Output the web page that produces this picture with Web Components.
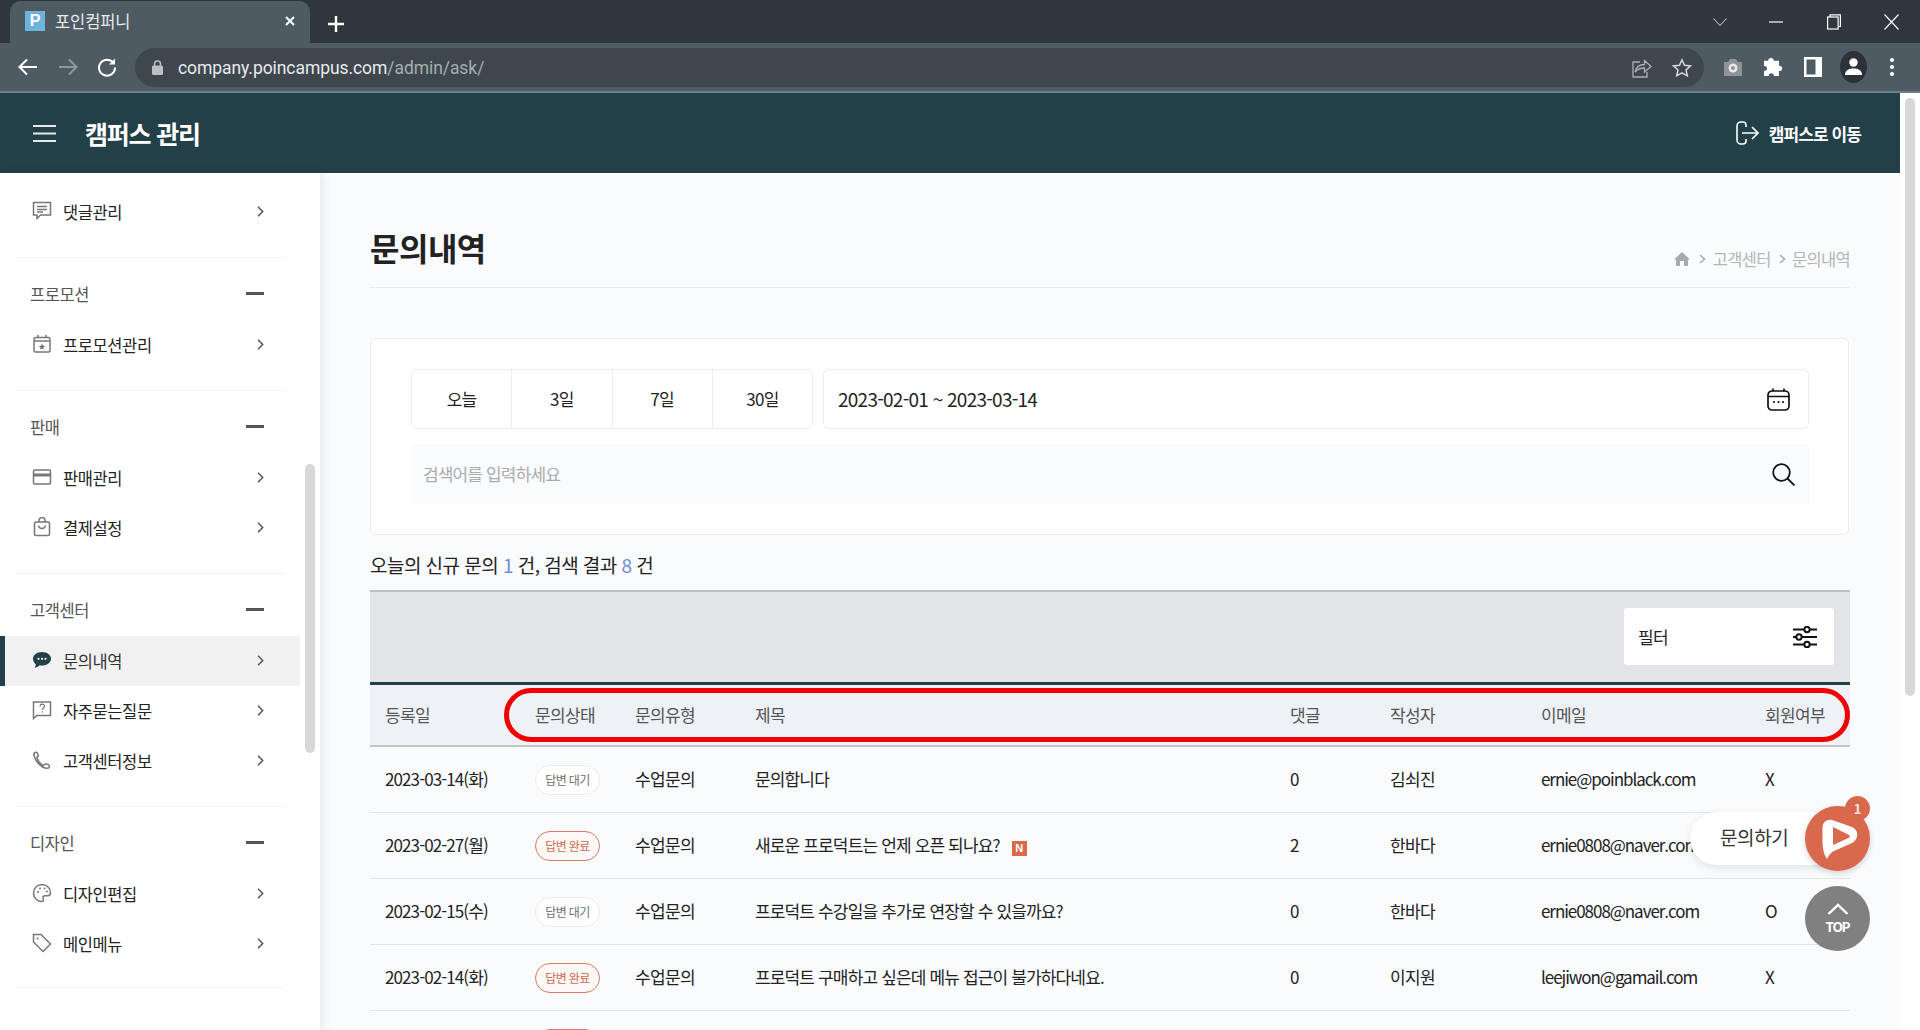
<!DOCTYPE html>
<html lang="ko">
<head>
<meta charset="utf-8">
<title>포인컴퍼니</title>
<style>
    html, body{
        margin: 0;
        padding: 0;
        height: 1030px;
        overflow: hidden;
        font-family: 'Noto Sans CJK KR', 'Noto Sans', sans-serif;
        color: #222;
        background: #fff;
    }
</style>
</head>
<body>
<browser-bar></browser-bar>
<page-frame>
    <admin-header></admin-header>
    <side-nav>
        <nav-item icon="comment">댓글관리</nav-item>
        <nav-sep></nav-sep>
        <nav-title>프로모션</nav-title>
        <nav-item icon="promo">프로모션관리</nav-item>
        <nav-sep></nav-sep>
        <nav-title>판매</nav-title>
        <nav-item icon="card">판매관리</nav-item>
        <nav-item icon="bag">결제설정</nav-item>
        <nav-sep></nav-sep>
        <nav-title>고객센터</nav-title>
        <nav-item icon="chat" active>문의내역</nav-item>
        <nav-item icon="faq">자주묻는질문</nav-item>
        <nav-item icon="phone">고객센터정보</nav-item>
        <nav-sep></nav-sep>
        <nav-title>디자인</nav-title>
        <nav-item icon="palette">디자인편집</nav-item>
        <nav-item icon="tag">메인메뉴</nav-item>
        <nav-sep style="margin-top:-2px"></nav-sep>
    </side-nav>
    <ask-page>
        <page-title>문의내역</page-title>
        <search-card></search-card>
        <ask-summary></ask-summary>
        <ask-toolbar></ask-toolbar>
        <ask-head></ask-head>
        <ask-row date="2023-03-14(화)" status="wait" kind="수업문의" comments="0" author="김쇠진" email="ernie@poinblack.com" member="X">문의합니다</ask-row>
        <ask-row date="2023-02-27(월)" status="done" kind="수업문의" comments="2" author="한바다" email="ernie0808@naver.com" member="O" fresh>새로운 프로덕트는 언제 오픈 되나요?</ask-row>
        <ask-row date="2023-02-15(수)" status="wait" kind="수업문의" comments="0" author="한바다" email="ernie0808@naver.com" member="O">프로덕트 수강일을 추가로 연장할 수 있을까요?</ask-row>
        <ask-row date="2023-02-14(화)" status="done" kind="수업문의" comments="0" author="이지원" email="leejiwon@gamail.com" member="X">프로덕트 구매하고 싶은데 메뉴 접근이 불가하다네요.</ask-row>
        <ask-row status="done" blank></ask-row>
    </ask-page>
    <float-actions></float-actions>
</page-frame>

<script>
const icons = {
    comment: '<path d="M1.5 1.5h17v12.5H8.5l-3.5 3.5V14H1.5z"/><path d="M5 5.5h10M5 8.5h10M5 11h6"/>',
    promo: '<rect x="2" y="3.5" width="16" height="14.5" rx="1.5"/><path d="M2 7h16M6 1v3M14 1v3"/><path d="M10 9.5l1 2.2 2.3.2-1.8 1.5.6 2.2-2.1-1.2-2.1 1.2.6-2.2-1.8-1.5 2.3-.2z" fill="#777" stroke="none"/>',
    card: '<rect x="1.5" y="3" width="17" height="14" rx="1.5"/><path d="M1.5 8h17" stroke-width="3"/>',
    bag: '<rect x="2.5" y="5" width="15" height="13.5" rx="1.5"/><path d="M7 5V3.5a3 3 0 0 1 6 0V5M6.5 8.5c.5 4 6.5 4 7 0"/>',
    chat: '<path d="M10 2c5 0 9 2.900 9 6.800s-4 6.800-9 6.800c-.9 0-1.700-.1-2.500-.3-1.300 1.500-3 2.200-5 2.400.8-1 1.300-2 1.400-3.300C2.300 13.100 1 11.100 1 8.800 1 4.900 5 2 10 2z" fill="#233f48" stroke="none"/><circle cx="6.500" cy="8.800" r="1.100" fill="#fff" stroke="none"/><circle cx="10" cy="8.800" r="1.100" fill="#fff" stroke="none"/><circle cx="13.500" cy="8.800" r="1.100" fill="#fff" stroke="none"/>',
    faq: '<path d="M1.500 2h17v13.500H5l-3.500 3z"/><path d="M8 6.500c0-3 4.500-3 4.500-.3 0 1.800-2.200 1.800-2.200 3.500M10.300 11.200v1.200" stroke-width="1.200"/>',
    phone: '<path d="M2 3.500c.7-1 2-1.500 3-1l1.500 3.300-1.700 1.700c.8 3 3.500 6.500 6.500 8l2-1.500c1.500-.2 3.500.5 4 1.800.3 1-.3 2.200-1.500 2.500-7 .5-14-8.500-13.800-15.800z"/>',
    palette: '<path d="M10 1.500c-5 0-8.500 3.800-8.500 8.500s3.800 8.500 8 8.500c2 0 2.500-1.500 1.700-2.800-.8-1.500 0-3 1.800-3h3c1.800 0 2.500-1.400 2.500-3 0-4.500-3.700-8.200-8.500-8.200z"/><circle cx="6" cy="9" r="1" fill="#777" stroke="none"/><circle cx="8" cy="5.500" r="1" fill="#777" stroke="none"/><circle cx="12.500" cy="5.500" r="1" fill="#777" stroke="none"/><circle cx="15" cy="8.500" r="1" fill="#777" stroke="none"/>',
    tag: '<path d="M1.500 1.500h7.500l9.500 9.500-7.500 7.500L1.500 9z"/><circle cx="5.500" cy="5.500" r="1" fill="#777" stroke="none"/>'
};

const barTemplate = document.createElement('template');
barTemplate.innerHTML = `
    <style>
        :host{
            display: block;
            height: 93px;
            font-family: 'Roboto', 'Noto Sans CJK KR', sans-serif;
        }
        .strip{
            height: 43px;
            background: #2f363d;
            display: flex;
            align-items: flex-end;
            padding-left: 10px;
        }
        .tab{
            width: 300px;
            height: 42px;
            box-sizing: border-box;
            background: #4f5b62;
            border-radius: 10px 10px 0 0;
            display: flex;
            align-items: center;
            padding: 0 14px 2px 15px;
            color: #e8eaed;
            font: 400 16.5px 'Noto Sans CJK KR', sans-serif;
        }
        .fav{
            width: 20px;
            height: 20px;
            background: #6cb4dc;
            color: #fff;
            font: 700 16px/20px 'Liberation Sans', sans-serif;
            text-align: center;
            margin-right: 10px;
        }
        .tab span.name{ flex: 1; letter-spacing: -.1px; }
        .plus{ margin: 0 0 11px 18px; }
        .spacer{ flex: 1; }
        .win{
            display: flex;
            align-items: center;
            height: 43px;
            padding-right: 21px;
        }
        .win svg{ display: block; }
        .tools{
            height: 48px;
            background: #4f5b62;
            border-bottom: 2px solid #6f8088;
            display: flex;
            align-items: center;
            padding-left: 17px;
            box-sizing: content-box;
        }
        .nav{
            display: flex;
            align-items: center;
            gap: 18px;
            width: 118px;
        }
        .url{
            width: 1569px;
            height: 39px;
            margin-top: 1px;
            background: #3f474e;
            border-radius: 20px;
            display: flex;
            align-items: center;
            padding: 0 12px 0 17px;
            box-sizing: border-box;
            color: #e8eaed;
            font-size: 17.500px;
            letter-spacing: -.07px;
        }
        .url em{ font-style: normal; color: #a6adb3; }
        .url .addr{ flex: 1; margin-left: 15px; white-space: nowrap; }
        .ext{
            display: flex;
            align-items: center;
            margin-left: 19px;
        }
    </style>
    <div class="strip">
        <div class="tab">
            <div class="fav">P</div>
            <span class="name">포인컴퍼니</span>
            <svg width="12" height="12" viewBox="0 0 12 12" fill="none" stroke="#fff" stroke-width="2"><path d="M2 2l8 8M10 2l-8 8"/></svg>
        </div>
        <svg class="plus" width="16" height="16" viewBox="0 0 16 16" fill="none" stroke="#fff" stroke-width="2.4"><path d="M8 0v16M0 8h16"/></svg>
        <div class="spacer"></div>
        <div class="win">
            <svg width="14" height="8" viewBox="0 0 14 8" fill="none" stroke="#d5d8da" stroke-width="1"><path d="M.5.5L7 7.500 13.500.5"/></svg>
            <svg style="margin-left:42px" width="14" height="2" viewBox="0 0 14 2" fill="none" stroke="#fff" stroke-width="1.200"><path d="M0 1h14"/></svg>
            <svg style="margin-left:44px" width="14" height="16" viewBox="0 0 14 16" fill="none" stroke="#fff" stroke-width="1.200"><rect x=".6" y="3" width="10.500" height="12"/><path d="M3 3V.8h10.400v11.700h-2.300"/></svg>
            <svg style="margin-left:43px" width="15" height="16" viewBox="0 0 15 16" fill="none" stroke="#fff" stroke-width="1.100"><path d="M.5.5l14 15M14.500.5l-14 15"/></svg>
        </div>
    </div>
    <div class="tools">
        <div class="nav">
            <svg width="22" height="20" viewBox="0 0 22 20" fill="none" stroke="#fff" stroke-width="2"><path d="M20 10H3M10 2.500L2.500 10l7.500 7.500"/></svg>
            <svg width="22" height="20" viewBox="0 0 22 20" fill="none" stroke="#8f989d" stroke-width="2"><path d="M2 10h17M12 2.500l7.500 7.500-7.500 7.500"/></svg>
            <svg width="20" height="20" viewBox="0 0 20 20" fill="none" stroke="#fff" stroke-width="2"><path d="M16.500 6A8 8 0 1 0 18 10.500"/><path d="M18 1.500v6h-6" fill="#fff" stroke="none"/></svg>
        </div>
        <div class="url">
            <svg width="11" height="15" viewBox="0 0 11 15" fill="#bcc0c3"><rect y="5.500" width="11" height="9.500" rx="1.500"/><path d="M2.500 6V4a3 3 0 0 1 6 0v2" fill="none" stroke="#bcc0c3" stroke-width="1.500"/></svg>
            <span class="addr">company.poincampus.com<em>/admin/ask/</em></span>
            <svg width="20" height="20" viewBox="0 0 20 20" fill="none" stroke="#aab0b4" stroke-width="1.300" style="margin-right:20px"><path d="M8 4H1v15h14v-5"/><path d="M3 14c1-5 5-7.500 9.500-7.500V2.500l6.500 6-6.500 5.500V10C8.500 10 5.500 11 3 14z"/></svg>
            <svg width="20" height="20" viewBox="0 0 20 20" fill="none" stroke="#d7dadc" stroke-width="1.500"><path d="M10 1.800l2.500 5.500 6 .6-4.500 4 1.300 5.900L10 14.800l-5.300 3 1.300-5.900-4.500-4 6-.6z"/></svg>
        </div>
        <div class="ext">
            <svg width="20" height="20" viewBox="0 0 20 20"><path d="M1 5h4l2-3h6l2 3h4v14H1z" fill="#8f9395"/><circle cx="10" cy="11" r="4.500" fill="#e8e8e8"/><circle cx="10" cy="11" r="2" fill="#8f9395"/></svg>
            <svg style="margin-left:20px" width="20" height="20" viewBox="0 0 20 20" fill="#fff"><path d="M8 1c1.800 0 2.800 1.200 2.800 2.800H16v5.100c1.800-.3 3.200.8 3.200 2.600S17.800 14.400 16 14v5H10.800c.3-1.700-.9-2.800-2.500-2.800S5.500 17.300 5.800 19H1v-5.200c1.700.3 3-.7 3-2.400S2.700 8.600 1 9V3.800h4.200C5.200 2.200 6.200 1 8 1z"/></svg>
            <svg style="margin-left:21px" width="18" height="20" viewBox="0 0 18 20"><rect width="18" height="20" fill="#fff"/><rect x="2.500" y="2.500" width="9" height="15" fill="#4f5b62"/></svg>
            <svg style="margin-left:18px" width="27" height="32" viewBox="0 0 27 32"><ellipse cx="13.500" cy="16" rx="13.500" ry="16" fill="#2c3238"/><circle cx="13.500" cy="11.500" r="4.200" fill="#fff"/><path d="M5 24c0-5 4-6.500 8.500-6.500S22 19 22 24z" fill="#fff"/></svg>
            <svg style="margin-left:22px" width="6" height="20" viewBox="0 0 6 20" fill="#fff"><circle cx="3" cy="3" r="2"/><circle cx="3" cy="10" r="2"/><circle cx="3" cy="17" r="2"/></svg>
        </div>
    </div>
`;
class BrowserBar extends HTMLElement {
    constructor(){
        super();
        this.attachShadow({mode: 'open'});
        this.shadowRoot.appendChild(barTemplate.content.cloneNode(true));
    }
}
window.customElements.define('browser-bar', BrowserBar);

const frameTemplate = document.createElement('template');
frameTemplate.innerHTML = `
    <style>
        :host{
            display: grid;
            position: relative;
            height: 937px;
            grid-template-columns: 320px 1580px 20px;
            grid-template-rows: 80px 857px;
            overflow: hidden;
            background: #fff;
        }
        ::slotted(admin-header){ grid-column: 1 / 3; grid-row: 1; }
        ::slotted(side-nav){ grid-column: 1; grid-row: 2; }
        ::slotted(ask-page){ grid-column: 2; grid-row: 2; }
        .scroll{
            grid-column: 3;
            grid-row: 1 / 3;
            padding: 5px 5px 0;
        }
        .thumb{
            height: 598px;
            background: #d8d8d8;
            border-radius: 5px;
        }
    </style>
    <slot></slot>
    <div class="scroll"><div class="thumb"></div></div>
`;
class PageFrame extends HTMLElement {
    constructor(){
        super();
        this.attachShadow({mode: 'open'});
        this.shadowRoot.appendChild(frameTemplate.content.cloneNode(true));
    }
}
window.customElements.define('page-frame', PageFrame);

const headerTemplate = document.createElement('template');
headerTemplate.innerHTML = `
    <style>
        :host{
            display: flex;
            align-items: center;
            background: #233f48;
            color: #fff;
            padding: 0 39px 0 33px;
        }
        h1{
            font-size: 25px;
            font-weight: 700;
            letter-spacing: -1.200px;
            margin: 0 0 0 29px;
            flex: 1;
        }
        a{
            display: flex;
            align-items: center;
            font-size: 17px;
            font-weight: 700;
            letter-spacing: -.9px;
        }
        a svg{ margin-right: 10px; margin-left: -1px; }
    </style>
    <svg width="23" height="17" viewBox="0 0 23 17" fill="none" stroke="#e6e9ea" stroke-width="2"><path d="M0 1h23M0 8.500h23M0 16h23"/></svg>
    <h1>캠퍼스 관리</h1>
    <a>
        <svg width="23" height="24" viewBox="0 0 23 24" fill="none" stroke="#fff" stroke-width="1.600"><path d="M10 6V4a3 3 0 0 0-3-3H5a4 4 0 0 0-4 4v14a4 4 0 0 0 4 4h2a3 3 0 0 0 3-3v-2"/><path d="M6 12h16M16 6l6 6-6 6"/></svg>
        캠퍼스로 이동
    </a>
`;
class AdminHeader extends HTMLElement {
    constructor(){
        super();
        this.attachShadow({mode: 'open'});
        this.shadowRoot.appendChild(headerTemplate.content.cloneNode(true));
    }
}
window.customElements.define('admin-header', AdminHeader);

const sideTemplate = document.createElement('template');
sideTemplate.innerHTML = `
    <style>
        :host{
            display: block;
            position: relative;
            z-index: 1;
            background: #fff;
            padding-top: 14px;
            box-shadow: 3px 0 9px rgba(60,70,90,.09);
            overflow: hidden;
        }
        .thumb{
            position: absolute;
            left: 305px;
            top: 291px;
            width: 10px;
            height: 289px;
            background: #d8d8d8;
            border-radius: 5px;
        }
    </style>
    <slot></slot>
    <div class="thumb"></div>
`;
class SideNav extends HTMLElement {
    constructor(){
        super();
        this.attachShadow({mode: 'open'});
        this.shadowRoot.appendChild(sideTemplate.content.cloneNode(true));
    }
}
window.customElements.define('side-nav', SideNav);

const itemTemplate = document.createElement('template');
itemTemplate.innerHTML = `
    <style>
        :host{
            display: flex;
            align-items: center;
            width: 300px;
            height: 50px;
            box-sizing: border-box;
            padding-left: 32px;
            font-size: 16.500px;
            letter-spacing: -.4px;
            color: #222;
        }
        :host([active]){
            background: #f1f1f1;
            box-shadow: inset 5px 0 0 #233f48;
            color: #333;
        }
        .ico{ width: 20px; height: 20px; margin: -3px 11px 0 0; flex: none; }
        .txt{ flex: 1; }
        .chev{ margin-right: 36px; margin-top: -1px; }
    </style>
    <svg class="ico" viewBox="0 0 20 20" fill="none" stroke="#777" stroke-width="1.500"></svg>
    <span class="txt"><slot></slot></span>
    <svg class="chev" width="7" height="11" viewBox="0 0 7 11" fill="none" stroke="#555" stroke-width="1.500"><path d="M1 .8l4.700 4.700L1 10.200"/></svg>
`;
class NavItem extends HTMLElement {
    constructor(){
        super();
        this.attachShadow({mode: 'open'});
        this.shadowRoot.appendChild(itemTemplate.content.cloneNode(true));
        this.shadowRoot.querySelector('.ico').innerHTML = icons[this.getAttribute('icon')];
    }
}
window.customElements.define('nav-item', NavItem);

const navTitleTemplate = document.createElement('template');
navTitleTemplate.innerHTML = `
    <style>
        :host{
            display: flex;
            align-items: center;
            justify-content: space-between;
            width: 300px;
            height: 34px;
            margin-bottom: 8px;
            box-sizing: border-box;
            padding: 0 36px 0 30px;
            font-size: 16.500px;
            letter-spacing: -.4px;
            color: #555;
        }
        span{ margin-top: -3px; }
        i{ display: block; width: 18px; height: 2.500px; background: #555; margin-top: -3px; }
    </style>
    <span><slot></slot></span>
    <i></i>
`;
class NavTitle extends HTMLElement {
    constructor(){
        super();
        this.attachShadow({mode: 'open'});
        this.shadowRoot.appendChild(navTitleTemplate.content.cloneNode(true));
    }
}
window.customElements.define('nav-title', NavTitle);

const navSepTemplate = document.createElement('template');
navSepTemplate.innerHTML = `
    <style>
        :host{ display: block; padding: 20px 0; }
        div{ margin-left: 15px; width: 270px; height: 1px; background: #f1f1f1; }
    </style>
    <div></div>
`;
class NavSep extends HTMLElement {
    constructor(){
        super();
        this.attachShadow({mode: 'open'});
        this.shadowRoot.appendChild(navSepTemplate.content.cloneNode(true));
    }
}
window.customElements.define('nav-sep', NavSep);

const pageTemplate = document.createElement('template');
pageTemplate.innerHTML = `
    <style>
        :host{
            display: block;
            background: #fafbfd;
            padding: 0 50px;
            overflow: hidden;
        }
    </style>
    <slot></slot>
`;
class AskPage extends HTMLElement {
    constructor(){
        super();
        this.attachShadow({mode: 'open'});
        this.shadowRoot.appendChild(pageTemplate.content.cloneNode(true));
    }
}
window.customElements.define('ask-page', AskPage);

const titleTemplate = document.createElement('template');
titleTemplate.innerHTML = `
    <style>
        :host{
            display: flex;
            justify-content: space-between;
            align-items: flex-end;
            height: 115px;
            box-sizing: border-box;
            border-bottom: 1px solid #e8e9eb;
            margin-bottom: 50px;
        }
        h2{
            margin: 0 0 17px;
            font-size: 32px;
            line-height: 46px;
            font-weight: 700;
            letter-spacing: -.5px;
            color: #222;
        }
        .crumb{
            display: flex;
            align-items: center;
            gap: 6px;
            color: #b4b6b8;
            font-size: 16.500px;
            letter-spacing: -.65px;
            margin-bottom: 16px;
        }
        .crumb b{ font-weight: 400; }
    </style>
    <h2><slot></slot></h2>
    <div class="crumb">
        <svg width="16" height="14" viewBox="0 0 16 14" fill="#a8a9aa"><path d="M8 0l8 7.500h-2V14h-4V9H6v5H2V7.500H0z"/></svg>
        <svg style="margin-left:3px" width="7" height="10" viewBox="0 0 7 10" fill="none" stroke="#a8a9aa" stroke-width="1.500"><path d="M1 1l4.500 4L1 9"/></svg>
        <b style="margin:0 2px 0 1px">고객센터</b>
        <svg width="7" height="10" viewBox="0 0 7 10" fill="none" stroke="#a8a9aa" stroke-width="1.500"><path d="M1 1l4.500 4L1 9"/></svg>
        <b>문의내역</b>
    </div>
`;
class PageTitle extends HTMLElement {
    constructor(){
        super();
        this.attachShadow({mode: 'open'});
        this.shadowRoot.appendChild(titleTemplate.content.cloneNode(true));
    }
}
window.customElements.define('page-title', PageTitle);

const cardTemplate = document.createElement('template');
cardTemplate.innerHTML = `
    <style>
        :host{
            display: block;
            height: 197px;
            box-sizing: border-box;
            margin-right: 1px;
            padding: 30px 39px 0 40px;
            background: #fff;
            border: 1px solid #ececee;
            border-radius: 6px;
        }
        .top{
            display: flex;
            gap: 10px;
            height: 60px;
        }
        .days{
            display: flex;
            width: 402px;
            box-sizing: border-box;
            border: 1px solid #ececee;
            border-radius: 6px;
        }
        .days div{
            flex: 1;
            display: flex;
            align-items: center;
            justify-content: center;
            padding-bottom: 2px;
            font-size: 17px;
            letter-spacing: -.7px;
            border-left: 1px solid #ececee;
        }
        .days div:first-child{ border-left: none; }
        .range{
            flex: 1;
            display: flex;
            align-items: center;
            justify-content: space-between;
            box-sizing: border-box;
            padding: 0 18px 0 14px;
            border: 1px solid #ececee;
            border-radius: 6px;
            font-size: 19px;
            letter-spacing: -.75px;
        }
        .range span, .find span{ margin-bottom: 2px; }
        .find{
            display: flex;
            align-items: center;
            justify-content: space-between;
            height: 60px;
            margin: 15px 0 0 1px;
            padding: 0 14px 0 11px;
            background: #fafbfd;
            font-size: 17px;
            letter-spacing: -.85px;
            color: #a9abae;
        }
    </style>
    <div class="top">
        <div class="days"><div>오늘</div><div>3일</div><div>7일</div><div>30일</div></div>
        <div class="range">
            <span>2023-02-01 ~ 2023-03-14</span>
            <svg width="23" height="23" viewBox="0 0 23 23" fill="none" stroke="#111" stroke-width="1.700"><rect x="1" y="3" width="21" height="19" rx="4"/><path d="M1 8.500h21M6 .5v3M17 .5v3"/><circle cx="7" cy="14" r="1.100" fill="#111" stroke="none"/><circle cx="11.500" cy="14" r="1.100" fill="#111" stroke="none"/><circle cx="16" cy="14" r="1.100" fill="#111" stroke="none"/></svg>
        </div>
    </div>
    <div class="find">
        <span>검색어를 입력하세요</span>
        <svg width="23" height="23" viewBox="0 0 23 23" fill="none" stroke="#111" stroke-width="1.800"><circle cx="9.500" cy="9.500" r="8.300"/><path d="M15.500 15.500l7 7"/></svg>
    </div>
`;
class SearchCard extends HTMLElement {
    constructor(){
        super();
        this.attachShadow({mode: 'open'});
        this.shadowRoot.appendChild(cardTemplate.content.cloneNode(true));
    }
}
window.customElements.define('search-card', SearchCard);

const summaryTemplate = document.createElement('template');
summaryTemplate.innerHTML = `
    <style>
        :host{
            display: block;
            height: 55px;
            line-height: 59px;
            font-size: 19px;
            letter-spacing: -.54px;
            color: #222;
        }
        b{ font-weight: 400; color: #6f8fd8; }
    </style>
    오늘의 신규 문의 <b>1</b> 건, 검색 결과 <b>8</b> 건
`;
class AskSummary extends HTMLElement {
    constructor(){
        super();
        this.attachShadow({mode: 'open'});
        this.shadowRoot.appendChild(summaryTemplate.content.cloneNode(true));
    }
}
window.customElements.define('ask-summary', AskSummary);

const toolbarTemplate = document.createElement('template');
toolbarTemplate.innerHTML = `
    <style>
        :host{
            display: flex;
            justify-content: flex-end;
            align-items: center;
            height: 95px;
            box-sizing: border-box;
            background: #e2e4e8;
            border-top: 2px solid #bfc0c2;
            border-bottom: 3px solid #233f48;
            padding: 0 16px 1px 0;
        }
        .filter{
            display: flex;
            align-items: center;
            justify-content: space-between;
            width: 210px;
            height: 57px;
            box-sizing: border-box;
            padding: 0 17px 0 14px;
            background: #fff;
            border-radius: 3px;
            font-size: 17px;
            letter-spacing: -.6px;
        }
    </style>
    <div class="filter">
        <span>필터</span>
        <svg width="24" height="22" viewBox="0 0 24 22" fill="none" stroke="#111" stroke-width="2"><path d="M0 3.500h11M17 3.500h7M0 11h3M9 11h15M0 18.500h11M17 18.500h7"/><circle cx="14" cy="3.500" r="2.700"/><circle cx="6" cy="11" r="2.700"/><circle cx="14" cy="18.500" r="2.700"/></svg>
    </div>
`;
class AskToolbar extends HTMLElement {
    constructor(){
        super();
        this.attachShadow({mode: 'open'});
        this.shadowRoot.appendChild(toolbarTemplate.content.cloneNode(true));
    }
}
window.customElements.define('ask-toolbar', AskToolbar);

const columns = '150px 100px 120px 535px 100px 151px 224px 1fr';

const headTemplate = document.createElement('template');
headTemplate.innerHTML = `
    <style>
        :host{
            display: grid;
            position: relative;
            grid-template-columns: ${columns};
            align-items: center;
            height: 62px;
            box-sizing: border-box;
            padding: 0 0 2px 15px;
            background: #eef1f6;
            border-bottom: 2px solid #c4c5c7;
            font-size: 17px;
            letter-spacing: -.6px;
            color: #555;
        }
        .mark{
            position: absolute;
            left: 134px;
            right: 0;
            top: 3px;
            height: 54px;
            box-sizing: border-box;
            border: 5px solid #f00000;
            border-radius: 27px;
        }
    </style>
    <div>등록일</div><div>문의상태</div><div>문의유형</div><div>제목</div><div>댓글</div><div>작성자</div><div>이메일</div><div>회원여부</div>
    <div class="mark"></div>
`;
class AskHead extends HTMLElement {
    constructor(){
        super();
        this.attachShadow({mode: 'open'});
        this.shadowRoot.appendChild(headTemplate.content.cloneNode(true));
    }
}
window.customElements.define('ask-head', AskHead);

const rowTemplate = document.createElement('template');
rowTemplate.innerHTML = `
    <style>
        :host{
            display: grid;
            grid-template-columns: ${columns};
            align-items: center;
            height: 66px;
            box-sizing: border-box;
            padding-left: 15px;
            border-bottom: 1px solid #e2e3e5;
            font-size: 17px;
            letter-spacing: -.6px;
            color: #222;
            white-space: nowrap;
        }
        .txt{ margin-bottom: 3px; }
        .date{ letter-spacing: -.9px; }
        .email{ letter-spacing: -1.050px; }
        .title{ letter-spacing: -.85px; }
        .badge{
            display: flex;
            align-items: center;
            justify-content: center;
            width: 65px;
            height: 30px;
            box-sizing: border-box;
            border-radius: 15px;
            border: 1px solid #ececee;
            background: #fff;
            font-size: 12px;
            letter-spacing: -.6px;
            color: #6f6f6f;
        }
        .badge.done{
            border-color: #d77a61;
            background: #fdf8f6;
            color: #cc6a4e;
        }
        .new{
            display: none;
            width: 15px;
            height: 15px;
            margin-left: 12px;
            background: #d9694c;
            color: #fff;
            font: 700 11px/15px 'Liberation Sans', sans-serif;
            letter-spacing: 0;
            text-align: center;
            vertical-align: 0;
        }
        :host([fresh]) .new{ display: inline-block; }
    </style>
    <div class="txt date"></div>
    <div><div class="badge"></div></div>
    <div class="txt kind"></div>
    <div class="txt title"><slot></slot><span class="new">N</span></div>
    <div class="txt comments"></div>
    <div class="txt author"></div>
    <div class="txt email"></div>
    <div class="txt member"></div>
`;
class AskRow extends HTMLElement {
    constructor(){
        super();
        this.attachShadow({mode: 'open'});
        this.shadowRoot.appendChild(rowTemplate.content.cloneNode(true));
        for (const key of ['date', 'kind', 'comments', 'author', 'email', 'member']) {
            this.shadowRoot.querySelector('.' + key).textContent = this.getAttribute(key) || '';
        }
        const badge = this.shadowRoot.querySelector('.badge');
        if (this.getAttribute('status') === 'done') badge.classList.add('done');
        if (!this.hasAttribute('blank')) {
            badge.textContent = this.getAttribute('status') === 'done' ? '답변 완료' : '답변 대기';
        }
    }
}
window.customElements.define('ask-row', AskRow);

const floatTemplate = document.createElement('template');
floatTemplate.innerHTML = `
    <style>
        :host{
            position: absolute;
            left: 1690px;
            top: 713px;
            width: 180px;
            display: block;
            z-index: 2;
        }
        .ask{
            display: flex;
            align-items: center;
            height: 65px;
            position: relative;
        }
        .pill{
            width: 150px;
            height: 53px;
            box-sizing: border-box;
            padding-left: 30px;
            background: #fff;
            border-radius: 27px;
            box-shadow: 0 3px 8px rgba(0,0,0,.1);
            font-size: 19px;
            line-height: 50px;
            letter-spacing: -.4px;
            color: #333;
        }
        .logo, .top{
            position: absolute;
            left: 115px;
            top: 0;
            width: 65px;
            height: 65px;
            border-radius: 50%;
        }
        .logo{
            background: #d9694c;
            box-shadow: 0 2px 6px rgba(0,0,0,.18);
        }
        .logo svg{ display: block; margin: 13px 0 0 17px; }
        .count{
            position: absolute;
            left: 155px;
            top: -10px;
            width: 25px;
            height: 25px;
            border-radius: 50%;
            background: #d9694c;
            color: #f3e3dc;
            font: 700 13px/25px 'Noto Sans CJK KR', sans-serif;
            text-align: center;
        }
        .top{
            top: 80px;
            background: #808080;
            color: #fff;
            display: flex;
            flex-direction: column;
            align-items: center;
            font: 700 13.500px/16px 'Noto Sans CJK KR', sans-serif;
            letter-spacing: -1.200px;
            box-sizing: border-box;
            padding-top: 17px;
        }
        .top svg{ margin-bottom: 3px; }
    </style>
    <div class="ask">
        <div class="pill">문의하기</div>
        <div class="logo">
            <svg width="36" height="40" viewBox="0 0 36 40"><path d="M5 40C2 36 .5 30 .5 22V9C.5 3 5 0 10 1l20 7c7 3 7 12 0 16l-18 8c-3 1.500-5 4-7 8z" fill="#fff"/><path d="M11 8l16 8c1 .8 1 2 0 2.800L11 26z" fill="#d9694c"/></svg>
        </div>
        <div class="count">1</div>
    </div>
    <div class="top">
        <svg width="22" height="12" viewBox="0 0 22 12" fill="none" stroke="#fff" stroke-width="2.400"><path d="M1.500 11L11 2l9.500 9"/></svg>
        TOP
    </div>
`;
class FloatActions extends HTMLElement {
    constructor(){
        super();
        this.attachShadow({mode: 'open'});
        this.shadowRoot.appendChild(floatTemplate.content.cloneNode(true));
    }
}
window.customElements.define('float-actions', FloatActions);
</script>
</body>
</html>
